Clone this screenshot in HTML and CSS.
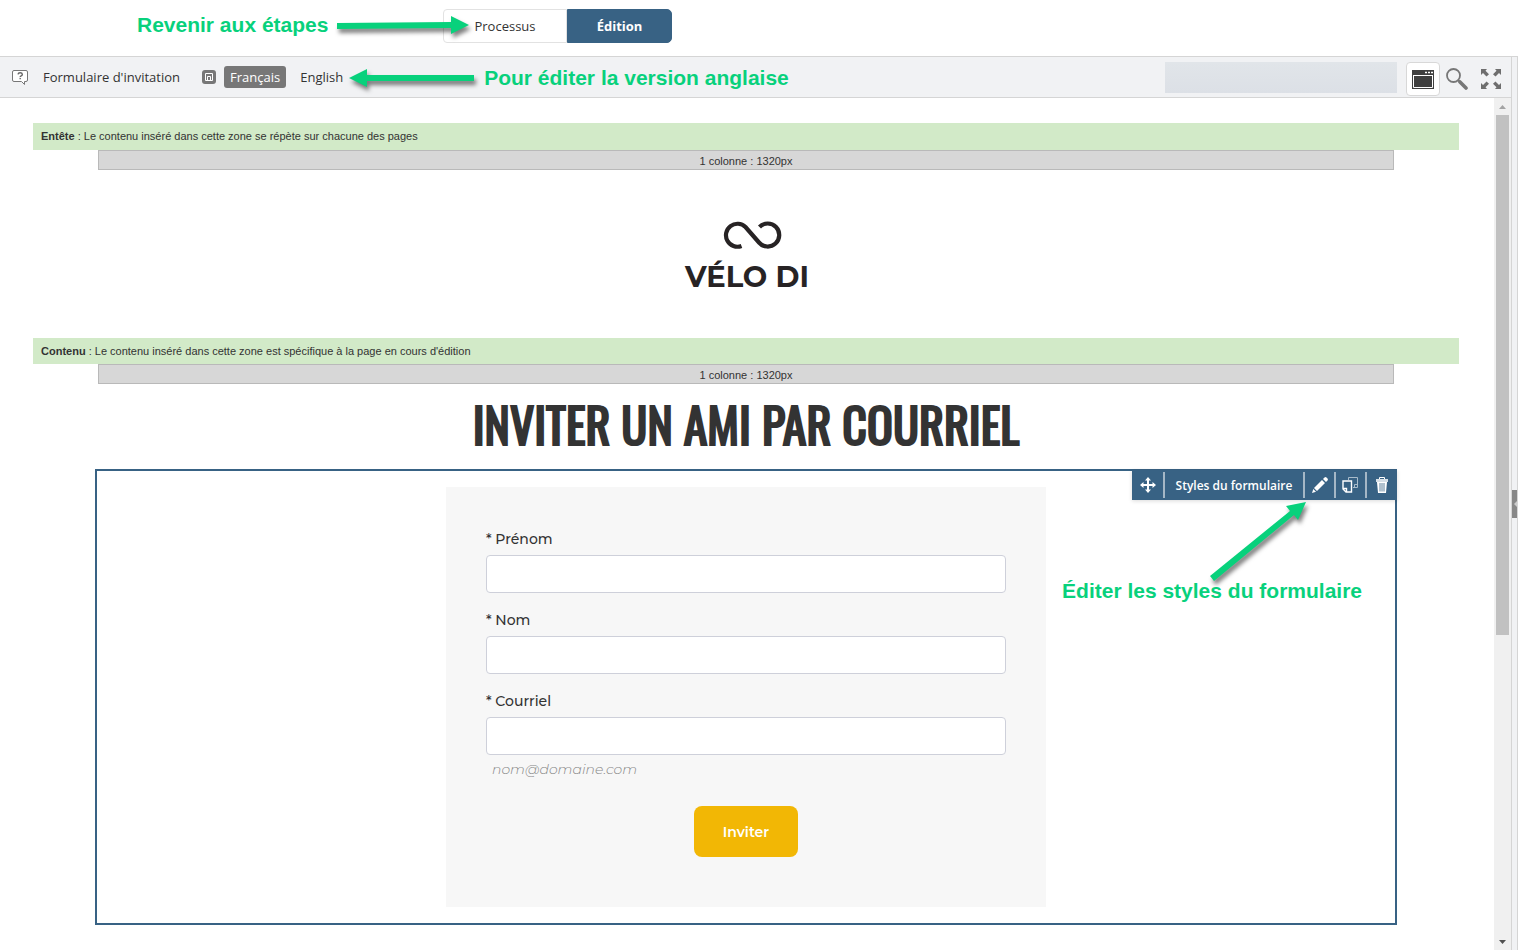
FILE: index.html
```
<!DOCTYPE html>
<html lang="fr">
<head>
	<meta charset="utf-8">
	<title>Formulaire d'invitation</title>
	<link rel="stylesheet" href="styles.css">
</head>
<body>

<header class="topbar">
	<nav class="tabs">
		<a class="tab" href="#processus">Processus</a>
		<a class="tab active" href="#edition">Édition</a>
	</nav>
	<div class="note note-steps">
		<span>Revenir aux étapes</span>
		<svg class="arrow" width="132" height="20" viewBox="0 0 132 20"><path d="M0 8L114 7V1L132 10L114 19V13L0 14z"/></svg>
	</div>
</header>

<div class="workspace">
	<main class="editor">

		<div class="toolbar">
			<button class="icon-btn help" type="button" aria-label="Aide">
				<svg width="17" height="17" viewBox="0 0 17 17"><path d="M2 1.500h12q1.500 0 1.500 1.500v8q0 1.500-1.500 1.500h-1.500v3l-3-3H2Q.5 12.500 .5 11V3Q.5 1.500 2 1.500z" fill="#fff" stroke="#777"/><path d="M6 5.300q.2-1.500 2.200-1.500t2.100 1.600q0 1-1.100 1.500t-1 1.200M8.200 9v1.300" fill="none" stroke="#666" stroke-width="1.400"/></svg>
			</button>
			<span class="page-name">Formulaire d'invitation</span>
			<div class="langs">
				<svg class="lang-icon" width="14" height="14" viewBox="0 0 14 14"><rect width="14" height="14" rx="3" fill="#777"/><path d="M3.500 3.500h7v7h-7zM5.500 10V6.500h3V10" fill="none" stroke="#fff"/></svg>
				<button class="lang active" type="button">Français</button>
				<button class="lang" type="button">English</button>
				<div class="note note-lang">
					<svg class="arrow" width="126" height="20" viewBox="0 0 126 20"><path d="M0 10L18 1V7H125V13H18V19z"/></svg>
					<span>Pour éditer la version anglaise</span>
				</div>
			</div>
			<div class="status"></div>
			<div class="tools">
				<button class="icon-btn boxed" type="button" aria-label="Aperçu">
					<svg width="22" height="19" viewBox="0 0 22 19"><path d="M0 0h22v19H0z" fill="#3f3f3f"/><path d="M1 5.500h20M1.500 5v12.500h19V5" fill="none" stroke="#fff"/><path d="M13 2.500h2M16 2.500h2M19 2.500h2" stroke="#fff" stroke-width="1.500"/></svg>
				</button>
				<button class="icon-btn" type="button" aria-label="Rechercher">
					<svg width="22" height="22" viewBox="0 0 22 22" fill="none" stroke="#777"><circle cx="7.500" cy="7.500" r="6.500" stroke-width="1.800"/><path d="M12 12l2 2" stroke-width="2"/><path d="M14 14l6 6" stroke-width="3.600" stroke-linecap="round"/></svg>
				</button>
				<button class="icon-btn" type="button" aria-label="Plein écran">
					<svg width="20" height="20" viewBox="0 0 20 20"><path d="M0 0h6L4.500 1.700 8 5.200 5.500 7.500 2 4 0 6zM20 0v6l-2-2-3.500 3.500L12 5.200l3.500-3.500L14 0zM0 20v-6l2 2 3.500-3.500L8 14.800l-3.500 3.500L6 20zM20 20h-6l1.500-1.700L12 14.800l2.500-2.300L18 16l2-2z" fill="#6e6e6e"/></svg>
				</button>
			</div>
		</div>

		<div class="view">
			<div class="canvas">
				<div class="zone zone-header"><b>Entête</b> : Le contenu inséré dans cette zone se répète sur chacune des pages</div>
				<div class="column">1 colonne : 1320px</div>

				<div class="logo">
					<svg width="70" height="28" viewBox="0 0 70 28"><path d="M29.500 25A11.500 11.500 0 1 1 33.500 6L47 21.500A11.500 11.500 0 1 0 47.500 6" fill="none" stroke="#272324" stroke-width="4.200"/></svg>
					<span>VÉLO DI</span>
				</div>

				<div class="zone"><b>Contenu</b> : Le contenu inséré dans cette zone est spécifique à la page en cours d'édition</div>
				<div class="column">1 colonne : 1320px</div>

				<h1>INVITER UN AMI PAR COURRIEL</h1>

				<div class="block">
					<div class="block-tools">
						<button type="button" aria-label="Déplacer">
							<svg width="16" height="16" viewBox="0 0 16 16" fill="#fff"><path d="M8 0l3 3.500H9V7h3.500V5L16 8l-3.500 3V9H9v3.500h2L8 16l-3-3.500h2V9H3.500v2L0 8l3.500-3v2H7V3.500H5z"/></svg>
						</button>
						<button class="block-name" type="button">Styles du formulaire</button>
						<button type="button" aria-label="Modifier">
							<svg width="16" height="16" viewBox="0 0 16 16" fill="#fff"><path d="M11 2l1.500-1.500q1-.8 2 0l1 1q.8 1 0 2L14 5zM10 3l3 3-8 8-3-3zM1.300 12L4 14.700 0 16z"/></svg>
						</button>
						<button type="button" aria-label="Dupliquer">
							<svg width="17" height="16" viewBox="0 0 17 16" fill="none"><path d="M6.500 3V.5h9v10H11M15.500 7.500h-3v3" stroke="#a9bccb"/><path d="M1 4h8.500v11H4l-3-3zM1 11.500h3.500V15" stroke="#fff" stroke-width="1.400"/></svg>
						</button>
						<button type="button" aria-label="Supprimer">
							<svg width="12" height="16" viewBox="0 0 12 16"><path d="M3.500 2.500v-2h5v2" fill="none" stroke="#fff"/><path d="M0 2h12v3H0z" fill="#d7e0e7"/><path d="M1 5h10l-1 11H2z" fill="#fff"/><path d="M4 6v8.500M6 6v8.500M8 6v8.500" stroke="#386284" stroke-width=".8"/></svg>
						</button>
					</div>

					<div class="note note-styles">
						<svg class="arrow" width="98" height="76" viewBox="0 0 98 76"><path d="M96 -1L88 17 84 12 4 78 0 73 80 8 76 3z"/></svg>
						<span>Éditer les styles du formulaire</span>
					</div>

					<form class="invite">
						<label for="prenom">* Prénom</label>
						<input id="prenom" type="text">
						<label for="nom">* Nom</label>
						<input id="nom" type="text">
						<label for="courriel">* Courriel</label>
						<input id="courriel" type="email" aria-describedby="aide-courriel">
						<p class="hint" id="aide-courriel">nom@domaine.com</p>
						<button type="button">Inviter</button>
					</form>
				</div>
			</div>

			<div class="scrollbar">
				<svg width="7" height="4" viewBox="0 0 7 4"><path d="M0 4h7L3.500 0z" fill="#a3a3a3"/></svg>
				<div class="thumb"></div>
				<svg width="7" height="4" viewBox="0 0 7 4"><path d="M0 0h7L3.500 4z" fill="#505050"/></svg>
			</div>
		</div>
	</main>

	<aside class="splitter">
		<div class="grip"><svg width="3" height="6" viewBox="0 0 3 6"><path d="M3 0v6L0 3z" fill="#ccc"/></svg></div>
	</aside>
</div>

</body>
</html>
```
FILE: styles.css
```
* {
	box-sizing: border-box;
}
body {
	margin: 0;
	height: 100vh;
	display: flex;
	flex-direction: column;
	overflow: hidden;
	background: #fff;
	color: #333;
	font-family: "Open Sans", sans-serif;
	font-size: 13px;
}
button {
	font-family: inherit;
	font-size: inherit;
	color: inherit;
	border: 0;
	padding: 0;
	background: none;
	cursor: pointer;
}
svg {
	display: block;
	flex: none;
}

/* top tabs */
.topbar {
	position: relative;
	height: 56px;
	flex: none;
	padding: 9px 0 0 443px;
}
.tabs {
	display: flex;
}
.tab {
	width: 124px;
	height: 34px;
	line-height: 32px;
	border: 1px solid #e2e2e2;
	border-radius: 4px 0 0 4px;
	text-align: center;
	color: #333;
	text-decoration: none;
}
.tab.active {
	width: 105px;
	background: #386284;
	border-color: #386284;
	border-radius: 0 5px 5px 0;
	color: #fff;
	font-weight: bold;
}

/* green notes */
.note {
	position: absolute;
	z-index: 2;
	display: flex;
	align-items: center;
	color: #08d17c;
	font-family: "Liberation Sans", Arial, sans-serif;
	font-size: 21px;
	line-height: 24px;
	font-weight: bold;
	white-space: nowrap;
	pointer-events: none;
}
.arrow {
	fill: #08d17c;
	overflow: visible;
	filter: drop-shadow(2px 4px 2px rgba(0, 0, 0, .5));
}
.note-steps {
	left: 137px;
	top: 13px;
	gap: 9px;
}
.note-lang {
	left: 100%;
	top: 0;
	gap: 9px;
}
.note-styles {
	top: 32px;
	right: 33px;
	flex-direction: column;
}
.note-styles .arrow {
	margin-left: 94px;
}

/* editor */
.workspace {
	flex: 1;
	min-height: 0;
	display: flex;
	border-top: 1px solid #d5d5d5;
}
.editor {
	flex: 1;
	min-width: 0;
	display: flex;
	flex-direction: column;
}
.toolbar {
	display: flex;
	align-items: center;
	height: 41px;
	flex: none;
	padding: 0 10px 0 12px;
	background: #f1f2f4;
	border-bottom: 1px solid #d5d5d5;
}
.page-name {
	margin: 0 22px 0 14px;
}
.langs {
	position: relative;
	display: flex;
	align-items: center;
}
.lang-icon {
	margin-right: 8px;
}
.lang {
	height: 22px;
	padding: 0 6px;
	border-radius: 3px;
}
.lang.active {
	margin-right: 8px;
	background: #777;
	color: #fff;
}
.status {
	width: 232px;
	height: 31px;
	margin-left: auto;
	background: linear-gradient(#e1e5e9, #dce0e6);
}
.tools {
	display: flex;
	align-items: center;
	gap: 6px;
	margin-left: 9px;
	padding-top: 4px;
}
.tools .icon-btn + .icon-btn + .icon-btn {
	margin-left: 7px;
}
.boxed {
	display: flex;
	align-items: center;
	justify-content: center;
	width: 34px;
	height: 34px;
	background: #fff;
	border: 1px solid #d8d8d8;
	border-radius: 4px;
}

.view {
	flex: 1;
	min-height: 0;
	display: flex;
}
.canvas {
	flex: 1;
	overflow: hidden;
	padding: 25px 35px 0 33px;
	font-family: "Liberation Sans", Arial, sans-serif;
	font-size: 11px;
}
.zone {
	padding: 0 8px;
	line-height: 26px;
	background: #d2eac8;
}
.zone-header {
	line-height: 27px;
}
.column {
	height: 20px;
	margin: 0 65px;
	line-height: 20px;
	background: #d7d7d7;
	border: 1px solid #b9b9b9;
	text-align: center;
}
.logo {
	display: flex;
	flex-direction: column;
	align-items: center;
	gap: 10px;
	height: 168px;
	padding: 51px 0 0 2px;
	color: #272324;
	font-family: Montserrat, Inter, sans-serif;
	font-size: 29px;
	line-height: 36px;
	font-weight: bold;
}
h1 {
	margin: 0;
	height: 85px;
	line-height: 80px;
	text-align: center;
	font-family: Oswald, "Liberation Sans Narrow", sans-serif;
	font-size: 48px;
	font-weight: 400;
	-webkit-text-stroke: 2px #333;
	white-space: nowrap;
}

/* form block */
.block {
	position: relative;
	margin: 0 62px;
	padding: 16px 0;
	border: 2px solid #386284;
}
.block-tools {
	position: absolute;
	top: -1px;
	right: -2px;
	display: flex;
	height: 30px;
	padding: 2px 1px 2px 0;
	background: #386284;
	box-shadow: 0 1px 4px rgba(0, 0, 0, .15);
	color: #fff;
	font-family: "Open Sans", sans-serif;
}
.block-tools button {
	display: flex;
	align-items: center;
	justify-content: center;
	width: 31px;
}
.block-tools button + button {
	border-left: 2px solid #a5b7c6;
}
.block-tools .block-name {
	width: 140px;
	font-size: 12px;
	font-weight: 600;
}
.invite {
	display: flex;
	flex-direction: column;
	max-width: 600px;
	height: 420px;
	margin: 0 auto;
	padding: 40px;
	background: #f7f7f7;
	font-family: Montserrat, Inter, sans-serif;
	font-size: 14px;
}
.invite label {
	line-height: 24px;
	margin-bottom: 4px;
	font-weight: 500;
}
.invite input {
	height: 38px;
	margin-bottom: 15px;
	padding: 0 12px;
	border: 1px solid #ced0da;
	border-radius: 4px;
	background: #fff;
	font: inherit;
}
.invite .hint {
	margin: -13px 6px 25px;
	line-height: 24px;
	color: #888;
	font-style: italic;
	font-weight: 300;
}
.invite button {
	align-self: center;
	width: 104px;
	height: 51px;
	border-radius: 8px;
	background: #f2b705;
	color: #fff;
	font-weight: 600;
}

.scrollbar {
	display: flex;
	flex-direction: column;
	align-items: center;
	width: 17px;
	padding: 7px 0 6px;
	background: #f0f0f0;
}
.thumb {
	width: 13px;
	height: 62%;
	margin: 6px 0 auto;
	background: #c1c1c1;
}
.splitter {
	display: flex;
	align-items: center;
	width: 7px;
	background: #f1f2f4;
	border: solid #d5d5d5;
	border-width: 0 1px;
}
.grip {
	display: flex;
	align-items: center;
	justify-content: flex-end;
	width: 5px;
	height: 28px;
	background: #888;
}
```
